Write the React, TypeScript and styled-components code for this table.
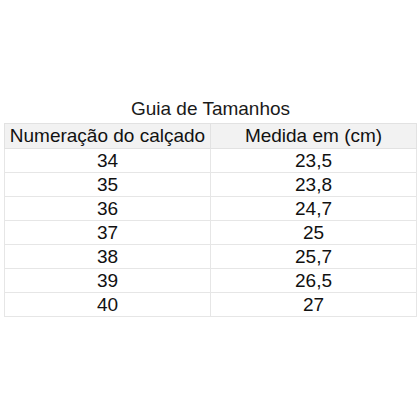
import styled, { createGlobalStyle } from "styled-components";

const GlobalStyle = createGlobalStyle`
  body {
    margin: 0;
    background: #ffffff;
    font-family: "Liberation Sans", Arial, sans-serif;
  }
`;

const Page = styled.div`
  width: 420px;
  height: 420px;
  display: flex;
  flex-direction: column;
  align-items: flex-start;
  padding: 97px 0 0 4px;
  box-sizing: border-box;
`;

const Title = styled.div`
  width: 413px;
  text-align: center;
  font-size: 19px;
  color: #1a1a1a;
  line-height: 24px;
  margin-bottom: 2px;
`;

const Table = styled.table`
  width: 413px;
  border-collapse: collapse;
  table-layout: fixed;
  font-size: 19px;
  color: #111;
`;

const HeadCell = styled.th`
  font-weight: normal;
  background: #f2f2f2;
  border: 1px solid #e2e2e2;
  height: 24px;
  padding: 0;
  text-align: center;
`;

const Cell = styled.td`
  border: 1px solid #e6e6e6;
  height: 23px;
  padding: 0;
  text-align: center;
`;

const sizes = [
  ["34", "23,5"],
  ["35", "23,8"],
  ["36", "24,7"],
  ["37", "25"],
  ["38", "25,7"],
  ["39", "26,5"],
  ["40", "27"],
];

export default function App() {
  return (
    <>
      <GlobalStyle />
      <Page>
        <Title>Guia de Tamanhos</Title>
        <Table>
          <thead>
            <tr>
              <HeadCell>Numeração do calçado</HeadCell>
              <HeadCell>Medida em (cm)</HeadCell>
            </tr>
          </thead>
          <tbody>
            {sizes.map(([num, cm]) => (
              <tr key={num}>
                <Cell>{num}</Cell>
                <Cell>{cm}</Cell>
              </tr>
            ))}
          </tbody>
        </Table>
      </Page>
    </>
  );
}
